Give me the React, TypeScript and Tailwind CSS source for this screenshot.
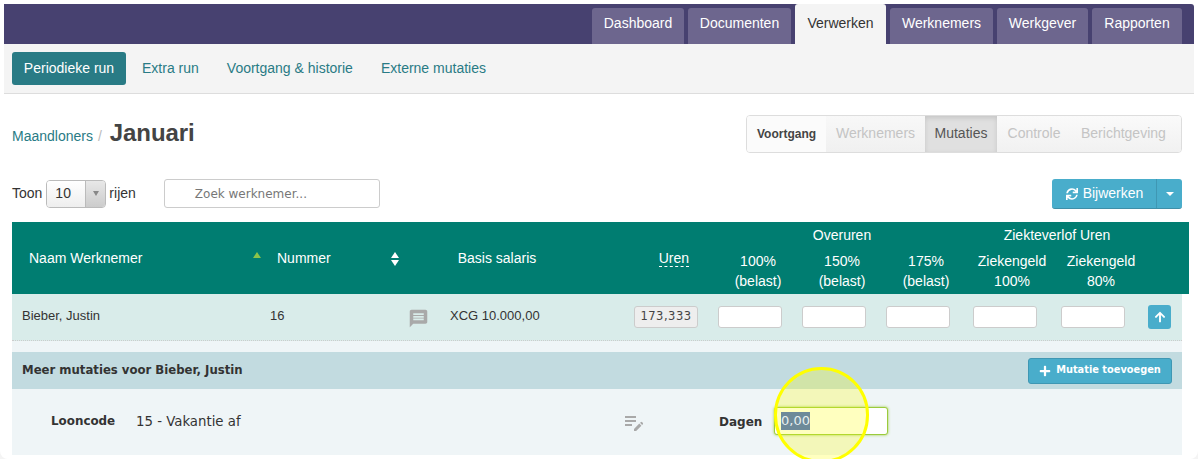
import { FaArrowUp, FaPlus, FaSync } from 'react-icons/fa';
import { MdEditNote, MdMessage } from 'react-icons/md';
import React from 'react';

const mainTabs = [
  { label: 'Dashboard', width: 'w-[92px]' },
  { label: 'Documenten', width: 'w-[103px]' },
  { label: 'Verwerken', width: 'w-[91px]' },
  { label: 'Werknemers', width: 'w-[103px]' },
  { label: 'Werkgever', width: 'w-[91px]' },
  { label: 'Rapporten', width: 'w-[90px]' },
];
const subTabs = ['Extra run', 'Voortgang & historie', 'Externe mutaties'];

const Cell: React.FC<{ top: string; bottom: string }> = ({ top, bottom }) => (
  <div className="text-center text-[14px] leading-[20px] pt-[3px]">
    <div>{top}</div>
    <div>{bottom}</div>
  </div>
);

const EmptyInput: React.FC = () => (
  <div className="w-[64px] h-[22px] bg-white border border-[#ccc] rounded-[3px]" />
);

const App: React.FC = () => {
  return (
    <div className="w-[1198px] h-[459px] bg-[#f4f4f4] overflow-hidden font-['Liberation_Sans',Arial,sans-serif] text-[#333]">
      <div className="h-[459px] bg-white rounded-b-[8px] px-[4px] pt-[4px]">
        {/* Hoofdmenu */}
        <div className="h-[40px] bg-[#474170] rounded-tr-[3px] flex justify-end items-end pr-[12px] gap-[4px]">
          {mainTabs.map((tab) =>
            tab.label === 'Verwerken' ? (
              <div key={tab.label} className={`h-[40px] ${tab.width} bg-[#f4f4f4] rounded-t-[3px] flex items-center justify-center pb-[2px] text-[14px] text-[#333]`}>
                {tab.label}
              </div>
            ) : (
              <div key={tab.label} className={`h-[36px] ${tab.width} bg-[#6d668e] rounded-t-[3px] flex items-center justify-center pb-[6px] text-[14px] text-white`}>
                {tab.label}
              </div>
            ),
          )}
        </div>

        {/* Submenu */}
        <div className="h-[50px] bg-[#f4f4f4] border-b border-[#ddd] flex items-start pt-[8px] pl-[8px]">
          <div className="h-[33px] w-[114px] bg-[#297b85] rounded-[3px] text-white text-[14px] flex items-center justify-center">
            Periodieke run
          </div>
          <div className="flex gap-[28px] ml-[16px] h-[33px] items-center text-[14px] text-[#297b85]">
            {subTabs.map((tab) => (
              <span key={tab}>{tab}</span>
            ))}
          </div>
        </div>

        <div className="pl-[8px] pr-[12px]">
          {/* Titel en stappen */}
          <div className="h-[85px] flex items-center justify-between pb-[6px]">
            <div className="flex items-baseline mb-[2px]">
              <span className="text-[14px] text-[#297b85]">Maandloners</span>
              <span className="text-[14px] text-[#bbb] ml-[5px]">/</span>
              <span className="text-[24px] font-bold text-[#444] ml-[8px] tracking-[-0.1px]">Januari</span>
            </div>
            <div className="h-[38px] w-[436px] border border-[#ddd] rounded-[4px] flex text-[14px] overflow-hidden">
              <div className="w-[79px] bg-[#fbfbfb] flex items-center justify-center text-[12px] font-bold text-[#444]">Voortgang</div>
              <div className="w-[99px] bg-gradient-to-b from-[#f8f8f8] to-[#f0f0f0] flex items-center justify-center text-[#c4c4c4]">Werknemers</div>
              <div className="w-[72px] bg-[#e0e0e0] shadow-[inset_0_2px_5px_rgba(0,0,0,0.12)] flex items-center justify-center text-[#555]">Mutaties</div>
              <div className="w-[74px] bg-gradient-to-b from-[#fafafa] to-[#f1f1f1] flex items-center justify-center text-[#c4c4c4]">Controle</div>
              <div className="flex-1 bg-gradient-to-b from-[#fafafa] to-[#f1f1f1] flex items-center justify-start pl-[10px] text-[#c4c4c4]">Berichtgeving</div>
            </div>
          </div>

          {/* Toon rijen en zoeken */}
          <div className="h-[43px] flex items-start">
            <div className="flex items-center h-[29px] text-[14px]">
              <span>Toon</span>
              <div className="ml-[4px] w-[60px] h-[28px] border border-[#bbb] rounded-[4px] flex overflow-hidden">
                <div className="flex-1 bg-gradient-to-b from-white to-[#eee] flex items-center pl-[8px]">10</div>
                <div className="w-[20px] border-l border-[#bbb] bg-gradient-to-b from-[#e8e8e8] to-[#ccc] flex items-center justify-center">
                  <span className="w-0 h-0 border-x-[3.5px] border-x-transparent border-t-[5px] border-t-[#888]" />
                </div>
              </div>
              <span className="ml-[3px]">rijen</span>
            </div>
            <div className="ml-[28px] w-[216px] h-[29px] border border-[#ccc] rounded-[3px] flex items-center pl-[30px] text-[12px] text-[#777] font-['DejaVu_Sans',sans-serif]">
              Zoek werknemer...
            </div>
            <div className="ml-auto flex h-[30px] w-[130px] rounded-[3px] bg-[#49adcb] border-b border-[#3f8fa8] text-white text-[14px]">
              <div className="w-[105px] flex items-center justify-center gap-[5px] pl-[1px] border-r border-[#3f97b3]">
                <FaSync size={12} />
                <span>Bijwerken</span>
              </div>
              <div className="flex-1 flex items-center justify-center">
                <span className="w-0 h-0 border-x-[4px] border-x-transparent border-t-[4px] border-t-white" />
              </div>
            </div>
          </div>

          {/* Tabelkop */}
          <div className="w-[1177px] h-[72px] bg-[#007d71] text-white grid grid-cols-[253px_140px_184px_127px_84px_84px_84px_88px_90px_1fr] grid-rows-[26px_46px]">
            <div className="row-span-2 relative flex items-center pl-[17px] text-[14px]">
              Naam Werknemer
              <span className="absolute left-[241px] top-[30px] w-0 h-0 border-x-[4px] border-x-transparent border-b-[6px] border-b-[#8bc34a]" />
            </div>
            <div className="row-span-2 relative flex items-center pl-[12px] text-[14px]">
              Nummer
              <span className="absolute left-[126px] top-[30px] w-0 h-0 border-x-[4px] border-x-transparent border-b-[6px] border-b-white" />
              <span className="absolute left-[126px] top-[38px] w-0 h-0 border-x-[4px] border-x-transparent border-t-[6px] border-t-white" />
            </div>
            <div className="row-span-2 flex items-center justify-center text-[14px]">Basis salaris</div>
            <div className="row-span-2 flex items-center justify-end pr-[27px] text-[14px]">
              <span className="border-b border-dashed border-white leading-[16px]">Uren</span>
            </div>
            <div className="col-span-3 flex items-center justify-center text-[14px] pt-[1px]">Overuren</div>
            <div className="col-span-2 flex items-center justify-center text-[14px] pt-[1px]">Ziekteverlof Uren</div>
            <div />
            <Cell top="100%" bottom="(belast)" />
            <Cell top="150%" bottom="(belast)" />
            <Cell top="175%" bottom="(belast)" />
            <Cell top="Ziekengeld" bottom="100%" />
            <Cell top="Ziekengeld" bottom="80%" />
            <div />
          </div>

          {/* Werknemer rij */}
          <div className="w-[1170px] h-[47px] bg-[#d9ecea] border-b border-dotted border-[#ccc] flex items-center text-[13px]">
            <div className="w-[258px] pl-[10px] mb-[2px]">Bieber, Justin</div>
            <div className="w-[138px] mb-[2px]">16</div>
            <MdMessage size={21} className="text-[#a9a9a9] mt-[2px]" />
            <div className="ml-[21px] w-[184px] mb-[2px]">XCG 10.000,00</div>
            <div className="w-[64px] h-[22px] border border-[#ccc] rounded-[3px] bg-[#eee] text-[#444] flex items-center justify-center text-[11.5px] font-['DejaVu_Sans',sans-serif] tracking-[0.5px]">
              173,333
            </div>
            <div className="ml-[20px]"><EmptyInput /></div>
            <div className="ml-[20px]"><EmptyInput /></div>
            <div className="ml-[20px]"><EmptyInput /></div>
            <div className="ml-[23px]"><EmptyInput /></div>
            <div className="ml-[24px]"><EmptyInput /></div>
            <div className="ml-[23px] w-[23px] h-[24px] bg-[#49adcb] rounded-[3px] flex items-center justify-center text-white">
              <FaArrowUp size={12} />
            </div>
          </div>

          {/* Meer mutaties */}
          <div className="w-[1170px] pt-[11px] bg-[#eff5f7]">
            <div className="h-[37px] bg-[#c2dbe0] flex items-center justify-between pl-[10px] pr-[10px]">
              <span className="font-['DejaVu_Sans',sans-serif] font-bold text-[11.7px]">Meer mutaties voor Bieber, Justin</span>
              <div className="w-[144px] h-[26px] bg-[#49adcb] border border-[#3f97b3] rounded-[3px] flex items-center justify-center gap-[5px] text-white text-[9.8px] font-bold font-['DejaVu_Sans',sans-serif]">
                <FaPlus size={12} />
                <span>Mutatie toevoegen</span>
              </div>
            </div>
            <div className="h-[66px] flex items-center font-['DejaVu_Sans',sans-serif] text-[13.3px] relative">
              <span className="ml-[39px] w-[85px] font-bold text-[11.9px]">Looncode</span>
              <span>15 - Vakantie af</span>
              <MdEditNote size={24} className="absolute left-[610px] top-[21px] text-[#a9a9a9]" />
              <span className="absolute left-[707px] top-[24px] font-bold text-[12px]">Dagen</span>
              <div className="absolute left-[762px] top-[18px] w-[114px] h-[28px] bg-white border border-[#9bcb3c] rounded-[3px] shadow-[0_0_3px_#9bcb3c] flex items-center pl-[6px]">
                <span className="relative z-10 bg-[#6e8a99] text-[#e8f0f0] leading-[18px] text-[13px]">0,00</span>
              </div>
            </div>
          </div>
        </div>
      </div>

      {/* Gele markering */}
      <div className="absolute left-[774px] top-[367px] w-[95px] h-[96px] rounded-full border-[3px] border-[#ffff00] bg-[#ffff00]/25" />
    </div>
  );
};

export default App;
